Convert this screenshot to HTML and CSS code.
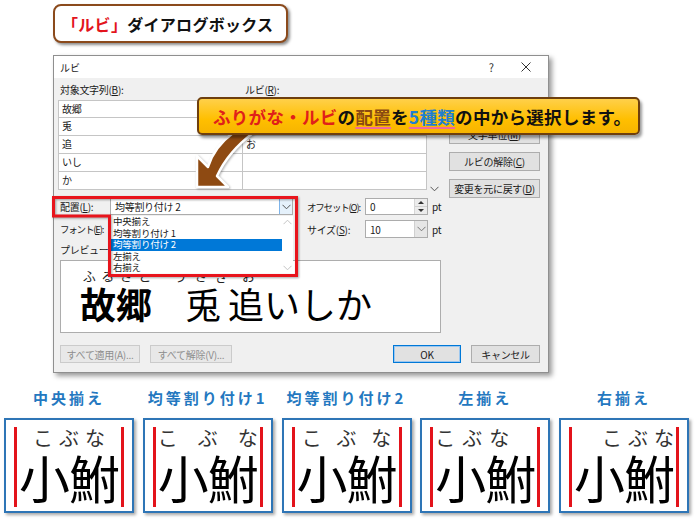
FILE: index.html
```html
<!DOCTYPE html>
<html lang="ja">
<head>
<meta charset="utf-8">
<title>ルビ ダイアログボックス</title>
<link rel="stylesheet" href="styles.css">
</head>
<body>
<div class="page">
  <header class="title-box"><span class="t-red">「ルビ」</span>ダイアログボックス</header>

  <section class="dialog">
    <div class="titlebar">
      <span class="tb-title">ルビ</span>
      <span class="tb-help">?</span>
      <svg class="tb-close" width="10" height="10" viewBox="0 0 10 10"><path d="M0.5 0.5L9.5 9.5M9.5 0.5L0.5 9.5" stroke="#333" stroke-width="1" fill="none"/></svg>
    </div>
    <div class="dlg-body">
      <div class="top">
        <div class="col-base">
          <div class="lbl">対象文字列(<u>B</u>):</div>
          <div class="cells">
            <div class="cell">故郷</div>
            <div class="cell">兎</div>
            <div class="cell">追</div>
            <div class="cell">いし</div>
            <div class="cell">か</div>
          </div>
        </div>
        <div class="col-ruby">
          <div class="lbl">ルビ(<u>R</u>):</div>
          <div class="cells">
            <div class="cell"></div>
            <div class="cell"></div>
            <div class="cell">お</div>
            <div class="cell"></div>
            <div class="cell"></div>
          </div>
        </div>
        <div class="col-scroll">
          <svg width="9" height="6" viewBox="0 0 9 6"><path d="M0.5 0.8L4.5 4.8L8.5 0.8" stroke="#555" stroke-width="1" fill="none"/></svg>
        </div>
        <div class="col-btns">
          <div class="btn"></div>
          <div class="btn">文字単位(<u>M</u>)</div>
          <div class="btn">ルビの解除(<u>C</u>)</div>
          <div class="btn">変更を元に戻す(<u>D</u>)</div>
        </div>
      </div>

      <div class="opts">
        <div class="lbl-in">配置(<u>L</u>):</div>
        <div class="combo">
          <span class="combo-text">均等割り付け 2</span>
          <span class="combo-btn hot"><svg width="9" height="6" viewBox="0 0 9 6"><path d="M0.5 0.8L4.5 4.8L8.5 0.8" stroke="#555" stroke-width="1" fill="none"/></svg></span>
        </div>
        <div></div>
        <div class="lbl-in tight">オフセット(<u>O</u>):</div>
        <div class="combo">
          <span class="combo-text">0</span>
          <span class="spin"><span class="spin-up"></span><span class="spin-down"></span></span>
        </div>
        <div class="unit">pt</div>

        <div class="lbl-in tight">フォント(<u>E</u>):</div>
        <div class="combo">
          <span class="combo-text"></span>
          <span class="combo-btn"><svg width="9" height="6" viewBox="0 0 9 6"><path d="M0.5 0.8L4.5 4.8L8.5 0.8" stroke="#555" stroke-width="1" fill="none"/></svg></span>
        </div>
        <div></div>
        <div class="lbl-in">サイズ(<u>S</u>):</div>
        <div class="combo">
          <span class="combo-text">10</span>
          <span class="combo-btn grey"><svg width="9" height="6" viewBox="0 0 9 6"><path d="M0.5 0.8L4.5 4.8L8.5 0.8" stroke="#777" stroke-width="1" fill="none"/></svg></span>
        </div>
        <div class="unit">pt</div>
      </div>

      <div class="lbl prev-lbl">プレビュー</div>
      <div class="preview">
        <div class="pv-ruby">
          <span class="rg rg1"><span>ふ</span><span>る</span><span>さ</span><span>と</span></span>
          <span class="rg rg2"><span>う</span><span>さ</span><span>ぎ</span></span>
          <span class="rg rg3"><span>お</span></span>
        </div>
        <div class="pv-base"><span class="pv-bold">故郷</span><span class="pv-usagi">兎</span><span class="pv-rest">追いしか</span></div>
      </div>

      <div class="bottom-btns">
        <div class="btn dis w1">すべて適用(A)...</div>
        <div class="btn dis w2">すべて解除(V)...</div>
        <div class="btn ok">OK</div>
        <div class="btn cancel">キャンセル</div>
      </div>
    </div>
  </section>

  <section class="examples">
    <div class="ex">
      <div class="ex-label">中央揃え</div>
      <div class="ex-box"><div class="ex-inner">
        <div class="ex-ruby r-center"><span>こ</span><span>ぶ</span><span>な</span></div>
        <div class="ex-base">小鮒</div>
      </div></div>
    </div>
    <div class="ex">
      <div class="ex-label">均等割り付け1</div>
      <div class="ex-box"><div class="ex-inner">
        <div class="ex-ruby r-dist1"><span>こ</span><span>ぶ</span><span>な</span></div>
        <div class="ex-base">小鮒</div>
      </div></div>
    </div>
    <div class="ex">
      <div class="ex-label">均等割り付け2</div>
      <div class="ex-box"><div class="ex-inner">
        <div class="ex-ruby r-dist2"><span>こ</span><span>ぶ</span><span>な</span></div>
        <div class="ex-base">小鮒</div>
      </div></div>
    </div>
    <div class="ex">
      <div class="ex-label">左揃え</div>
      <div class="ex-box"><div class="ex-inner">
        <div class="ex-ruby r-left"><span>こ</span><span>ぶ</span><span>な</span></div>
        <div class="ex-base">小鮒</div>
      </div></div>
    </div>
    <div class="ex">
      <div class="ex-label">右揃え</div>
      <div class="ex-box"><div class="ex-inner">
        <div class="ex-ruby r-right"><span>こ</span><span>ぶ</span><span>な</span></div>
        <div class="ex-base">小鮒</div>
      </div></div>
    </div>
  </section>

  <div class="dropdown">
    <div class="dd-items">
      <div class="dd-item">中央揃え</div>
      <div class="dd-item">均等割り付け 1</div>
      <div class="dd-item sel">均等割り付け 2</div>
      <div class="dd-item">左揃え</div>
      <div class="dd-item">右揃え</div>
    </div>
    <div class="dd-scroll">
      <svg width="9" height="6" viewBox="0 0 9 6"><path d="M0.5 5.2L4.5 1.2L8.5 5.2" stroke="#c4c4c4" stroke-width="1" fill="none"/></svg>
      <svg width="9" height="6" viewBox="0 0 9 6"><path d="M0.5 0.8L4.5 4.8L8.5 0.8" stroke="#c4c4c4" stroke-width="1" fill="none"/></svg>
    </div>
  </div>

  <svg class="red-frame" width="248" height="84" viewBox="52 195 248 84">
    <path d="M53.5 197.5H296.5V275.5H109.5V216H53.5Z" fill="none" stroke="#e8141c" stroke-width="3" stroke-linejoin="miter"/>
  </svg>

  <svg class="arrow" width="80" height="66" viewBox="185 128 80 66">
    <path d="M233 133Q214 147 208 167L197 156L197 187L228 187L217 176Q228 152 253 133Z" fill="#8e4a12" stroke="#ffffff" stroke-width="2.5" stroke-linejoin="round"/>
  </svg>

  <div class="callout">
    <span class="c-red">ふりがな・ルビ</span>の<span class="c-brown">配置</span>を<span class="c-blue">5種類</span>の中から選択します。
  </div>
</div>
</body>
</html>
```

FILE: styles.css
```css
html, body {
  margin: 0;
  padding: 0;
  background: #ffffff;
}

body {
  font-family: "Noto Sans CJK JP", "Noto Sans", sans-serif;
  color: #1a1a1a;
}

.page {
  position: relative;
  width: 700px;
  height: 526px;
  overflow: hidden;
  padding-top: 4px;
  box-sizing: border-box;
}

/* ---------- title label ---------- */
.title-box {
  margin-left: 53px;
  width: 235px;
  height: 39px;
  box-sizing: border-box;
  border: 2px solid #8b4a1c;
  border-radius: 8px;
  box-shadow: 2px 2px 3px rgba(0, 0, 0, 0.45);
  display: flex;
  align-items: center;
  padding-left: 7px;
  font-size: 16px;
  font-weight: 700;
  letter-spacing: 0.3px;
  color: #111;
  background: #fff;
}

.t-red {
  color: #e3141c;
}

/* ---------- dialog ---------- */
.dialog {
  margin: 12px 0 0 53px;
  width: 494px;
  border: 1px solid #8f8f8f;
  background: #f0f0f0;
  box-shadow: 3px 3px 5px rgba(0, 0, 0, 0.4);
}

.titlebar {
  height: 22px;
  background: #ffffff;
  display: flex;
  align-items: center;
  padding: 0 17px 0 6px;
  font-size: 10px;
}

.tb-title {
  flex: 1;
}

.tb-help {
  font-size: 11px;
  color: #333;
  margin-right: 27px;
}

.dlg-body {
  padding: 6px 8px 9px 4px;
  font-size: 10px;
  letter-spacing: -0.3px;
  color: #1a1a1a;
}

.lbl {
  height: 16px;
  line-height: 12px;
  padding-left: 2px;
}

.top {
  display: flex;
  height: 114px;
}

.col-base {
  width: 185px;
}

.col-ruby {
  width: 184px;
}

.cells .cell {
  height: 18px;
  box-sizing: border-box;
  border: 1px solid #c5c5c5;
  border-top: 0;
  background: #ffffff;
  padding-left: 3px;
  line-height: 16px;
  white-space: nowrap;
}

.cells .cell:first-child {
  border-top: 1px solid #c5c5c5;
}

.col-ruby .cells .cell {
  border-left: 0;
}

.col-scroll {
  width: 22px;
  padding-top: 96px;
  padding-left: 3px;
  box-sizing: border-box;
}

.col-btns {
  width: 91px;
  padding-top: 14px;
  display: flex;
  flex-direction: column;
  gap: 8px;
}

.btn {
  height: 19px;
  box-sizing: border-box;
  border: 1px solid #adadad;
  background: #e1e1e1;
  display: flex;
  align-items: center;
  justify-content: center;
  font-size: 10px;
  white-space: nowrap;
}

/* options grid */
.opts {
  display: grid;
  grid-template-columns: 52px 183px 12px 60px 63px auto;
  grid-template-rows: 17px 18px;
  row-gap: 5px;
  align-items: center;
}

.lbl-in {
  padding-left: 2px;
  white-space: nowrap;
}

.lbl-in.tight {
  font-size: 9.5px;
  letter-spacing: -1.2px;
}

.combo {
  height: 100%;
  box-sizing: border-box;
  border: 1px solid #acacac;
  background: #ffffff;
  display: flex;
  align-items: center;
}

.combo-text {
  flex: 1;
  padding-left: 4px;
  white-space: nowrap;
}

.combo-btn {
  width: 12px;
  height: 100%;
  display: flex;
  align-items: center;
  justify-content: center;
}

.combo-btn.hot {
  background: #e5f1fb;
  border-left: 1px solid #7eb4ea;
}

.combo-btn.grey {
  background: #e6e6e6;
  border-left: 1px solid #d0d0d0;
}

.spin {
  width: 12px;
  height: 100%;
  display: flex;
  flex-direction: column;
  border-left: 1px solid #d6d6d6;
}

.spin-up,
.spin-down {
  flex: 1;
  background: #ececec;
  position: relative;
}

.spin-up {
  border-bottom: 1px solid #d0d0d0;
}

.spin-up::after,
.spin-down::after {
  content: "";
  position: absolute;
  left: 3px;
  width: 0;
  height: 0;
  border-left: 3px solid transparent;
  border-right: 3px solid transparent;
}

.spin-up::after {
  top: 2px;
  border-bottom: 3px solid #333;
}

.spin-down::after {
  top: 2px;
  border-top: 3px solid #333;
}

.unit {
  padding-left: 4px;
}

.prev-lbl {
  margin-top: 6px;
  height: 12px;
}

.preview {
  margin: 4px 0 0 2px;
  width: 381px;
  height: 73px;
  box-sizing: border-box;
  border: 1px solid #adadad;
  background: #ffffff;
  padding: 7px 0 0 19px;
  letter-spacing: 0;
}

.pv-ruby {
  height: 16px;
  display: flex;
  font-size: 13px;
  line-height: 16px;
  color: #222;
}

.rg {
  display: flex;
  justify-content: space-around;
}

.rg1 {
  width: 74px;
}

.rg2 {
  width: 62px;
  margin-left: 16px;
}

.rg3 {
  margin-left: 10px;
}

.pv-base {
  font-size: 36px;
  line-height: 38px;
  color: #000;
  white-space: nowrap;
}

.pv-bold {
  font-weight: 700;
}

.pv-usagi {
  margin-left: 33px;
}

.pv-rest {
  margin-left: 7px;
}

.bottom-btns {
  margin-top: 12px;
  display: flex;
  height: 18px;
  gap: 10px;
}

.bottom-btns .btn {
  height: 18px;
}

.btn.dis {
  color: #8d8d8d;
  background: #e8e8e8;
  border-color: #cbcbcb;
}

.btn.w1 {
  width: 80px;
  margin-left: 2px;
}

.btn.w2 {
  width: 82px;
}

.btn.ok {
  width: 68px;
  margin-left: auto;
  border: 1px solid #0078d7;
  box-shadow: inset 0 0 0 1px #9cc7ef;
}

.btn.cancel {
  width: 69px;
}

/* ---------- examples ---------- */
.examples {
  display: flex;
  gap: 8.75px;
  padding-left: 4px;
  margin-top: 16px;
}

.ex {
  width: 130px;
}

.ex-label {
  height: 18px;
  line-height: 18px;
  text-align: center;
  font-size: 15px;
  font-weight: 700;
  color: #2478c0;
  letter-spacing: 3px;
  white-space: nowrap;
}

.ex-box {
  margin-top: 11px;
  height: 95px;
  box-sizing: border-box;
  border: 2px solid #2e75b6;
  background: #ffffff;
  box-shadow: 2px 2px 3px rgba(0, 0, 0, 0.35);
  padding: 7px 8px 4px;
}

.ex-inner {
  height: 80px;
  border-left: 3px solid #e3131b;
  border-right: 3px solid #e3131b;
  display: flex;
  flex-direction: column;
}

.ex-ruby {
  height: 22px;
  display: flex;
  font-size: 20px;
  line-height: 22px;
  color: #333;
}

.r-center {
  justify-content: center;
  gap: 6px;
}

.r-dist1 {
  justify-content: space-between;
  padding: 0 2px;
}

.r-dist2 {
  justify-content: space-around;
}

.r-left {
  justify-content: flex-start;
  gap: 7px;
  padding-left: 2px;
}

.r-right {
  justify-content: flex-end;
  gap: 6px;
  padding-right: 2px;
}

.ex-base {
  font-size: 51px;
  line-height: 56px;
  text-align: center;
  color: #000;
  white-space: nowrap;
  letter-spacing: -1px;
}

/* ---------- overlays ---------- */
.dropdown {
  position: absolute;
  left: 111px;
  top: 216px;
  width: 182px;
  height: 59px;
  background: #ffffff;
  display: flex;
  font-size: 9.5px;
  letter-spacing: -0.2px;
  color: #1a1a1a;
}

.dd-items {
  flex: 1;
  display: flex;
  flex-direction: column;
}

.dd-item {
  height: 11.6px;
  line-height: 11.6px;
  padding-left: 2px;
  white-space: nowrap;
}

.dd-item.sel {
  background: #0078d7;
  color: #ffffff;
}

.dd-scroll {
  width: 11px;
  display: flex;
  flex-direction: column;
  justify-content: space-between;
  align-items: center;
  padding: 3px 0 4px;
  box-sizing: border-box;
}

.red-frame {
  position: absolute;
  left: 52px;
  top: 195px;
  filter: drop-shadow(1px 1px 1px rgba(0, 0, 0, 0.35));
}

.arrow {
  position: absolute;
  left: 185px;
  top: 128px;
  filter: drop-shadow(1px 1px 1px rgba(0, 0, 0, 0.3));
}

.callout {
  position: absolute;
  left: 197px;
  top: 97px;
  width: 443px;
  height: 38px;
  box-sizing: border-box;
  border: 2px solid #6e3f0e;
  border-radius: 5px;
  background: linear-gradient(#ffd04a, #ffbf00 60%, #f7b400);
  box-shadow: 2px 3px 3px rgba(0, 0, 0, 0.4);
  padding-left: 14px;
  display: flex;
  align-items: center;
  font-size: 17.5px;
  font-weight: 700;
  letter-spacing: 0.3px;
  color: #111;
  white-space: nowrap;
}

.c-red {
  color: #e0201a;
}

.c-brown {
  color: #8a4a12;
  text-decoration: underline;
  text-decoration-color: #f06a9a;
  text-decoration-thickness: 2px;
  text-underline-offset: 3px;
}

.c-blue {
  color: #1f7fd0;
  text-decoration: underline;
  text-decoration-color: #f06a9a;
  text-decoration-thickness: 2px;
  text-underline-offset: 3px;
}
```
